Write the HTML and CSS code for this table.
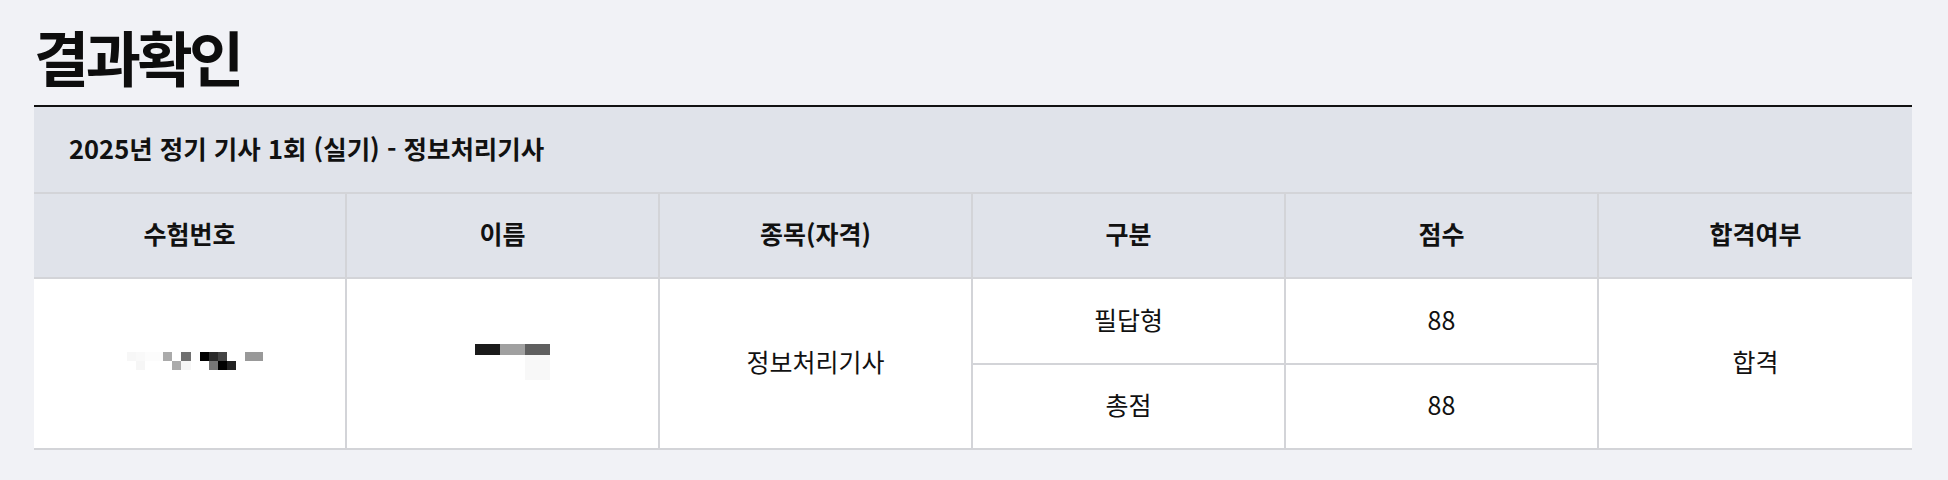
FILE: index.html
```html
<!DOCTYPE html>
<html lang="ko">
<head>
<meta charset="utf-8">
<title>결과확인</title>
<link rel="stylesheet" href="styles.css">
</head>
<body>
<main class="page">
  <h1 class="title">결과확인</h1>
  <section class="result">
    <div class="caption">2025년 정기 기사 1회 (실기) - 정보처리기사</div>
    <div class="grid">
      <div class="cell head">수험번호</div>
      <div class="cell head">이름</div>
      <div class="cell head">종목(자격)</div>
      <div class="cell head">구분</div>
      <div class="cell head">점수</div>
      <div class="cell head last">합격여부</div>

      <div class="cell span2 media">
        <svg class="mosaic mosaic-id" width="136" height="18" viewBox="0 0 136 18" aria-hidden="true">
          <rect x="0" y="0" width="9" height="9" fill="#f7f7f7"/>
          <rect x="9" y="0" width="9" height="9" fill="#f9f9f9"/>
          <rect x="18" y="0" width="18" height="9" fill="#fcfcfc"/>
          <rect x="36" y="0" width="9" height="9" fill="#aaaaaa"/>
          <rect x="54" y="0" width="10" height="9" fill="#707070"/>
          <rect x="73" y="0" width="9" height="9" fill="#000000"/>
          <rect x="82" y="0" width="9" height="9" fill="#2a2a2a"/>
          <rect x="91" y="0" width="9" height="9" fill="#444444"/>
          <rect x="118" y="0" width="18" height="9" fill="#999999"/>
          <rect x="9" y="9" width="9" height="9" fill="#f6f6f6"/>
          <rect x="45" y="9" width="9" height="9" fill="#aaaaaa"/>
          <rect x="54" y="9" width="10" height="9" fill="#f6f6f6"/>
          <rect x="82" y="9" width="9" height="9" fill="#777777"/>
          <rect x="91" y="9" width="9" height="9" fill="#000000"/>
          <rect x="100" y="9" width="9" height="9" fill="#222222"/>
        </svg>
      </div>
      <div class="cell span2 media">
        <svg class="mosaic mosaic-name" width="75" height="36" viewBox="0 0 75 36" aria-hidden="true">
          <rect x="0" y="0" width="25" height="11" fill="#1a1a1a"/>
          <rect x="25" y="0" width="25" height="11" fill="#a0a0a0"/>
          <rect x="50" y="0" width="25" height="11" fill="#5f5f5f"/>
          <rect x="50" y="11" width="25" height="25" fill="#f8f8f8"/>
        </svg>
      </div>
      <div class="cell span2">정보처리기사</div>
      <div class="cell">필답형</div>
      <div class="cell">88</div>
      <div class="cell span2 last">합격</div>
      <div class="cell">총점</div>
      <div class="cell">88</div>
    </div>
  </section>
</main>
</body>
</html>
```

FILE: styles.css
```css
* {
  box-sizing: border-box;
}

html, body {
  margin: 0;
  padding: 0;
}

body {
  background: #f1f2f6;
  color: #111111;
  font-family: "Noto Sans CJK KR", "Noto Sans", sans-serif;
}

.page {
  padding: 16px 36px 30px 34px;
}

.title {
  margin: 0 0 9px 0;
  height: 80px;
  line-height: 80px;
  font-size: 60px;
  font-weight: 700;
  letter-spacing: -3.5px;
  color: #0d0d0d;
}

.result {
  border-top: 2px solid #111111;
}

.caption {
  height: 87px;
  display: flex;
  align-items: center;
  padding-left: 35px;
  padding-bottom: 5px;
  background: #e0e3ea;
  border-bottom: 2px solid #d3d4d8;
  font-size: 25.5px;
  font-weight: 700;
  letter-spacing: 0;
}

.grid {
  display: grid;
  grid-template-columns: repeat(6, 1fr);
  grid-template-rows: 85px 86px 85px;
}

.cell {
  display: flex;
  align-items: center;
  justify-content: center;
  padding-bottom: 5px;
  background: #ffffff;
  border-right: 2px solid #d3d4d8;
  border-bottom: 2px solid #d3d4d8;
  font-size: 25px;
  font-weight: 400;
  letter-spacing: 0;
}

.cell.media {
  padding-bottom: 0;
}

.cell.last {
  border-right: none;
}

.cell.head {
  background: #e0e3ea;
  font-weight: 700;
}

.cell.span2 {
  grid-row: span 2;
}

.mosaic {
  display: block;
}

.mosaic-id {
  margin: 0 0 5px 10px;
}

.mosaic-name {
  margin: 0 0 3px 19px;
}
```
